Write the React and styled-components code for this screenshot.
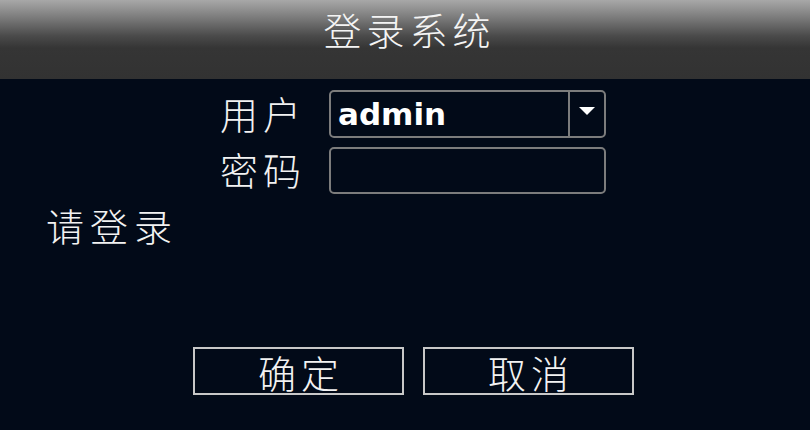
import React from 'react';
import styled, { createGlobalStyle } from 'styled-components';

const bg = '#020a18';
const cjk = '"Noto Sans CJK SC", "Noto Sans", sans-serif';

const GlobalStyle = createGlobalStyle`
  html, body {
    margin: 0;
    padding: 0;
    background: ${bg};
  }
`;

const App = () => {
  return (
    <>
      <GlobalStyle />
      <Screen>
        <Header>
          <Title>登录系统</Title>
        </Header>
        <Body>
          <Form>
            <Label>用户</Label>
            <Select>
              <SelectValue>admin</SelectValue>
              <SelectArrow>
                <svg width="16" height="9" viewBox="0 0 16 9">
                  <polygon points="0,0 16,0 8,8" fill="#fff" />
                </svg>
              </SelectArrow>
            </Select>
            <Label>密码</Label>
            <Input />
          </Form>
          <Status>请登录</Status>
          <ButtonRow>
            <DlgButton>确定</DlgButton>
            <DlgButton>取消</DlgButton>
          </ButtonRow>
        </Body>
      </Screen>
    </>
  );
};

export default App;

const Screen = styled.div`
  width: 810px;
  height: 430px;
  background: ${bg};
  display: flex;
  flex-direction: column;
  overflow: hidden;
  font-family: ${cjk};
  font-weight: 300;
  color: #f2f2f2;
`;

const Header = styled.div`
  height: 79px;
  flex-shrink: 0;
  box-sizing: border-box;
  padding-top: 8px;
  display: flex;
  justify-content: center;
  background: linear-gradient(
    to bottom,
    #a8a8a8 0px,
    #7a7a7a 18px,
    #4a4a4a 36px,
    #353535 48px,
    #323232 79px
  );
`;

const Title = styled.div`
  font-size: 38px;
  line-height: 42px;
  letter-spacing: 5px;
  padding-left: 9px;
  color: #f4f4f4;
`;

const Body = styled.div`
  padding-top: 11px;
  display: flex;
  flex-direction: column;
`;

const Form = styled.div`
  display: grid;
  grid-template-columns: 90px 277px;
  column-gap: 19px;
  row-gap: 9px;
  padding-left: 220px;
  align-items: center;
`;

const Label = styled.div`
  font-size: 38px;
  line-height: 40px;
  letter-spacing: 5px;
  white-space: nowrap;
  margin-top: -3px;
`;

const Field = styled.div`
  box-sizing: border-box;
  height: 48px;
  border: 2px solid #7c7c7c;
  border-radius: 5px;
`;

const Select = styled(Field)`
  display: flex;
  align-items: stretch;
`;

const SelectValue = styled.div`
  flex: 1;
  display: flex;
  align-items: center;
  padding-left: 7px;
  font-family: "DejaVu Sans", sans-serif;
  font-weight: bold;
  font-size: 31px;
  color: #fff;
`;

const SelectArrow = styled.div`
  width: 34px;
  border-left: 2px solid #7c7c7c;
  display: flex;
  align-items: center;
  justify-content: center;
  padding-bottom: 6px;
`;

const Input = styled(Field)`
  height: 47px;
`;

const Status = styled.div`
  margin-top: 11px;
  padding-left: 46px;
  font-size: 38px;
  line-height: 40px;
  letter-spacing: 6px;
`;

const ButtonRow = styled.div`
  margin-top: 102px;
  padding-left: 193px;
  display: flex;
  gap: 19px;
`;

const DlgButton = styled.div`
  box-sizing: border-box;
  width: 211px;
  height: 48px;
  border: 2px solid #c8c8c8;
  display: flex;
  align-items: center;
  justify-content: center;
  font-size: 38px;
  letter-spacing: 5px;
  padding-left: 5px;
  color: #f2f2f2;
`;
